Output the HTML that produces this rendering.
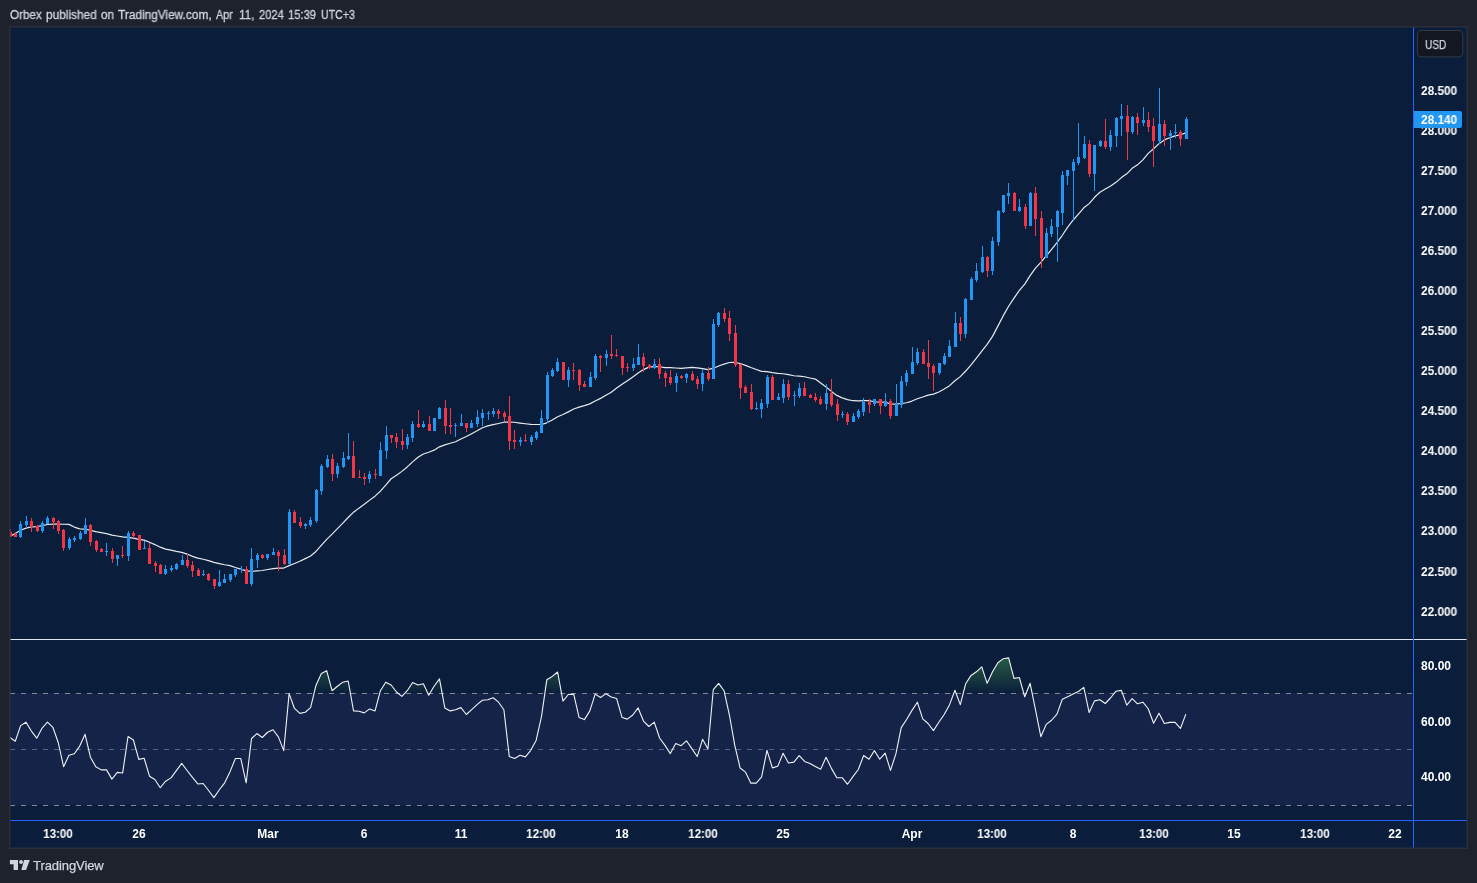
<!DOCTYPE html><html><head><meta charset="utf-8"><title>Chart</title><style>
html,body{margin:0;padding:0}body{width:1477px;height:883px;background:#1e222d;position:relative;overflow:hidden;font-family:"Liberation Sans",sans-serif}
.t{position:absolute;white-space:nowrap;line-height:1;color:#fff;font-weight:bold;font-size:12px;will-change:transform}
.pl{left:1420.5px;transform-origin:0 50%;transform:scaleX(.985)}
.tl{transform:translateX(-50%)}
.hw{top:8.8px;font-weight:normal;color:#d1d4dc;transform-origin:0 50%;-webkit-text-stroke:0.3px #d1d4dc}
</style></head><body>
<svg width="1477" height="883" viewBox="0 0 1477 883" style="position:absolute;left:0;top:0">
<defs><linearGradient id="ob" gradientUnits="userSpaceOnUse" x1="0" y1="610" x2="0" y2="693.6"><stop offset="0" stop-color="#4caf50" stop-opacity="1"/><stop offset="1" stop-color="#4caf50" stop-opacity="0"/></linearGradient>
<clipPath id="pane"><rect x="10" y="27" width="1403" height="793"/></clipPath></defs>
<rect x="9" y="26" width="1459" height="823" fill="#2a2e39"/>
<rect x="10" y="27" width="1457" height="821" fill="#0a1e3b"/>
<rect x="10" y="693" width="1403" height="112" fill="#7e57c2" fill-opacity="0.1"/>
<path d="M9.90 693.50 L9.90 693.50 L15.27 693.50 L20.64 693.50 L26.01 693.50 L31.38 693.50 L36.75 693.50 L42.12 693.50 L47.49 693.50 L52.86 693.50 L58.23 693.50 L63.60 693.50 L68.96 693.50 L74.33 693.50 L79.70 693.50 L85.07 693.50 L90.44 693.50 L95.81 693.50 L101.18 693.50 L106.55 693.50 L111.92 693.50 L117.29 693.50 L122.66 693.50 L128.03 693.50 L133.40 693.50 L138.77 693.50 L144.14 693.50 L149.51 693.50 L154.88 693.50 L160.25 693.50 L165.62 693.50 L170.99 693.50 L176.35 693.50 L181.72 693.50 L187.09 693.50 L192.46 693.50 L197.83 693.50 L203.20 693.50 L208.57 693.50 L213.94 693.50 L219.31 693.50 L224.68 693.50 L230.05 693.50 L235.42 693.50 L240.79 693.50 L246.16 693.50 L251.53 693.50 L256.90 693.50 L262.27 693.50 L267.64 693.50 L273.01 693.50 L278.38 693.50 L283.74 693.50 L289.11 693.50 L294.48 693.50 L299.85 693.50 L305.22 693.50 L310.59 693.50 L315.96 685.45 L321.33 673.46 L326.70 670.67 L332.07 690.71 L337.44 686.27 L342.81 682.17 L348.18 681.02 L353.55 693.50 L358.92 693.50 L364.29 693.50 L369.66 693.50 L375.03 693.50 L380.40 690.71 L385.76 682.17 L391.13 684.96 L396.50 692.02 L401.87 693.50 L407.24 690.71 L412.61 682.50 L417.98 684.96 L423.35 683.81 L428.72 693.50 L434.09 686.27 L439.46 678.88 L444.83 693.50 L450.20 693.50 L455.57 693.50 L460.94 693.50 L466.31 693.50 L471.68 693.50 L477.05 693.50 L482.42 693.50 L487.79 693.50 L493.16 693.50 L498.52 693.50 L503.89 693.50 L509.26 693.50 L514.63 693.50 L520.00 693.50 L525.37 693.50 L530.74 693.50 L536.11 693.50 L541.48 693.50 L546.85 679.70 L552.22 676.42 L557.59 671.99 L562.96 693.50 L568.33 693.50 L573.70 693.50 L579.07 693.50 L584.44 693.50 L589.81 693.50 L595.18 693.50 L600.55 693.50 L605.91 693.50 L611.28 693.50 L616.65 693.50 L622.02 693.50 L627.39 693.50 L632.76 693.50 L638.13 693.50 L643.50 693.50 L648.87 693.50 L654.24 693.50 L659.61 693.50 L664.98 693.50 L670.35 693.50 L675.72 693.50 L681.09 693.50 L686.46 693.50 L691.83 693.50 L697.20 693.50 L702.57 693.50 L707.94 693.50 L713.30 689.56 L718.67 683.32 L724.04 690.71 L729.41 693.50 L734.78 693.50 L740.15 693.50 L745.52 693.50 L750.89 693.50 L756.26 693.50 L761.63 693.50 L767.00 693.50 L772.37 693.50 L777.74 693.50 L783.11 693.50 L788.48 693.50 L793.85 693.50 L799.22 693.50 L804.59 693.50 L809.96 693.50 L815.33 693.50 L820.69 693.50 L826.06 693.50 L831.43 693.50 L836.80 693.50 L842.17 693.50 L847.54 693.50 L852.91 693.50 L858.28 693.50 L863.65 693.50 L869.02 693.50 L874.39 693.50 L879.76 693.50 L885.13 693.50 L890.50 693.50 L895.87 693.50 L901.24 693.50 L906.61 693.50 L911.98 693.50 L917.35 693.50 L922.72 693.50 L928.08 693.50 L933.45 693.50 L938.82 693.50 L944.19 693.50 L949.56 693.50 L954.93 690.20 L960.30 693.50 L965.67 683.80 L971.04 675.42 L976.41 671.81 L981.78 666.88 L987.15 683.30 L992.52 671.81 L997.89 662.78 L1003.26 658.67 L1008.63 657.85 L1014.00 678.38 L1019.37 677.56 L1024.74 693.50 L1030.11 683.30 L1035.47 693.50 L1040.84 693.50 L1046.21 693.50 L1051.58 693.50 L1056.95 693.50 L1062.32 693.50 L1067.69 693.50 L1073.06 693.50 L1078.43 691.51 L1083.80 687.41 L1089.17 693.50 L1094.54 693.50 L1099.91 693.50 L1105.28 693.50 L1110.65 693.50 L1116.02 691.19 L1121.39 690.36 L1126.76 693.50 L1132.13 693.50 L1137.50 693.50 L1142.86 693.50 L1148.23 693.50 L1153.60 693.50 L1158.97 693.50 L1164.34 693.50 L1169.71 693.50 L1175.08 693.50 L1180.45 693.50 L1185.82 693.50 L1185.82 693.50 Z" fill="url(#ob)" clip-path="url(#pane)"/>
<g shape-rendering="crispEdges" fill="none" stroke-width="1" stroke-dasharray="5 6">
<path d="M10 693.5H1413" stroke="#858894"/>
<path d="M10 749.5H1413" stroke="#5a6480"/>
<path d="M10 805.5H1413" stroke="#858894"/>
</g>
<path d="M9.90 536.40 L15.27 533.47 L20.64 530.20 L26.01 528.12 L31.38 526.89 L36.75 526.57 L42.12 525.64 L47.49 524.52 L52.86 524.19 L58.23 524.16 L63.60 524.24 L68.96 524.41 L74.33 527.08 L79.70 528.86 L85.07 529.03 L90.44 530.31 L95.81 531.68 L101.18 532.65 L106.55 533.63 L111.92 535.06 L117.29 535.99 L122.66 536.95 L128.03 537.39 L133.40 538.14 L138.77 539.29 L144.14 540.14 L149.51 542.19 L154.88 544.58 L160.25 547.18 L165.62 549.08 L170.99 550.08 L176.35 551.32 L181.72 552.42 L187.09 554.07 L192.46 556.37 L197.83 558.07 L203.20 559.27 L208.57 560.67 L213.94 562.41 L219.31 563.57 L224.68 564.76 L230.05 565.66 L235.42 567.47 L240.79 569.11 L246.16 570.82 L251.53 571.37 L256.90 570.92 L262.27 570.52 L267.64 569.53 L273.01 568.68 L278.38 568.08 L283.74 568.07 L289.11 565.65 L294.48 563.50 L299.85 561.24 L305.22 558.64 L310.59 555.95 L315.96 551.46 L321.33 545.47 L326.70 539.33 L332.07 534.08 L337.44 528.69 L342.81 523.13 L348.18 517.49 L353.55 512.19 L358.92 508.14 L364.29 504.34 L369.66 500.13 L375.03 496.18 L380.40 491.08 L385.76 485.03 L391.13 478.75 L396.50 475.26 L401.87 471.37 L407.24 466.92 L412.61 461.92 L417.98 457.27 L423.35 453.96 L428.72 452.21 L434.09 450.15 L439.46 446.85 L444.83 444.84 L450.20 443.29 L455.57 441.73 L460.94 438.97 L466.31 436.47 L471.68 433.67 L477.05 430.82 L482.42 427.73 L487.79 425.88 L493.16 424.68 L498.52 423.48 L503.89 422.22 L509.26 422.02 L514.63 422.26 L520.00 423.07 L525.37 423.77 L530.74 424.42 L536.11 424.48 L541.48 424.48 L546.85 422.83 L552.22 420.04 L557.59 416.78 L562.96 414.53 L568.33 411.89 L573.70 409.04 L579.07 407.15 L584.44 405.65 L589.81 403.85 L595.18 401.00 L600.55 398.36 L605.91 395.35 L611.28 392.30 L616.65 388.05 L622.02 384.35 L627.39 380.75 L632.76 376.90 L638.13 372.90 L643.50 369.60 L648.87 367.10 L654.24 366.54 L659.61 366.74 L664.98 367.55 L670.35 367.70 L675.72 368.00 L681.09 368.35 L686.46 367.80 L691.83 367.44 L697.20 367.79 L702.57 368.64 L707.94 369.68 L713.30 368.19 L718.67 366.04 L724.04 364.18 L729.41 362.48 L734.78 362.33 L740.15 363.53 L745.52 365.33 L750.89 367.47 L756.26 369.47 L761.63 371.42 L767.00 371.57 L772.37 372.67 L777.74 373.36 L783.11 373.76 L788.48 374.71 L793.85 375.75 L799.22 376.16 L804.59 376.76 L809.96 378.01 L815.33 379.06 L820.69 383.05 L826.06 387.06 L831.43 391.36 L836.80 395.41 L842.17 397.87 L847.54 399.57 L852.91 400.72 L858.28 400.83 L863.65 400.54 L869.02 400.64 L874.39 401.74 L879.76 402.04 L885.13 402.25 L890.50 403.85 L895.87 404.21 L901.24 403.51 L906.61 402.76 L911.98 401.07 L917.35 398.77 L922.72 396.97 L928.08 395.12 L933.45 394.12 L938.82 392.02 L944.19 389.07 L949.56 385.67 L954.93 380.73 L960.30 376.63 L965.67 371.04 L971.04 364.89 L976.41 358.19 L981.78 351.10 L987.15 344.35 L992.52 336.36 L997.89 326.11 L1003.26 315.66 L1008.63 306.26 L1014.00 298.16 L1019.37 290.41 L1024.74 284.12 L1030.11 275.56 L1035.47 268.17 L1040.84 262.43 L1046.21 255.93 L1051.58 249.43 L1056.95 242.69 L1062.32 235.28 L1067.69 227.08 L1073.06 220.23 L1078.43 214.12 L1083.80 207.77 L1089.17 203.61 L1094.54 197.30 L1099.91 192.30 L1105.28 189.09 L1110.65 186.09 L1116.02 182.34 L1121.39 177.58 L1126.76 173.83 L1132.13 168.37 L1137.50 164.87 L1142.86 159.91 L1148.23 153.35 L1153.60 148.75 L1158.97 143.64 L1164.34 139.89 L1169.71 137.79 L1175.08 135.88 L1180.45 134.73 L1185.82 132.83" fill="none" stroke="#e6e9ee" stroke-width="1.2" stroke-linejoin="round" clip-path="url(#pane)"/>
<g shape-rendering="crispEdges" clip-path="url(#pane)"><path d="M20 521h1v17h-1z M19 524h3v13h-3z M26 516h1v12h-1z M25 521h3v4h-3z M42 521h1v12h-1z M41 523h3v8h-3z M47 516h1v8h-1z M46 518h3v6h-3z M69 537h1v13h-1z M68 539h3v9h-3z M74 536h1v6h-1z M73 538h3v2h-3z M80 531h1v9h-1z M79 533h3v6h-3z M85 518h1v16h-1z M84 525h3v9h-3z M106 543h1v13h-1z M105 551h3v1h-3z M117 555h1v11h-1z M116 555h3v4h-3z M128 531h1v30h-1z M127 533h3v23h-3z M144 541h1v8h-1z M143 548h3v1h-3z M165 565h1v10h-1z M164 569h3v5h-3z M171 565h1v7h-1z M170 568h3v2h-3z M176 563h1v7h-1z M175 564h3v5h-3z M182 555h1v10h-1z M181 560h3v5h-3z M203 570h1v6h-1z M202 574h3v1h-3z M219 570h1v17h-1z M218 582h3v4h-3z M224 574h1v9h-1z M223 579h3v4h-3z M230 574h1v8h-1z M229 574h3v6h-3z M235 569h1v8h-1z M234 569h3v6h-3z M241 566h1v7h-1z M240 569h3v1h-3z M251 548h1v38h-1z M250 559h3v25h-3z M257 553h1v15h-1z M256 555h3v5h-3z M267 554h1v6h-1z M266 554h3v4h-3z M273 548h1v7h-1z M272 552h3v3h-3z M289 509h1v55h-1z M288 512h3v52h-3z M305 523h1v6h-1z M304 524h3v2h-3z M310 517h1v10h-1z M309 520h3v5h-3z M316 489h1v34h-1z M315 490h3v31h-3z M321 464h1v31h-1z M320 466h3v25h-3z M327 455h1v13h-1z M326 459h3v8h-3z M337 463h1v15h-1z M336 466h3v8h-3z M343 452h1v16h-1z M342 458h3v9h-3z M348 433h1v27h-1z M347 456h3v3h-3z M369 471h1v12h-1z M368 474h3v5h-3z M380 442h1v34h-1z M379 450h3v26h-3z M386 426h1v33h-1z M385 435h3v16h-3z M407 434h1v15h-1z M406 437h3v8h-3z M412 421h1v21h-1z M411 424h3v14h-3z M423 421h1v7h-1z M422 424h3v3h-3z M434 418h1v13h-1z M433 418h3v13h-3z M439 407h1v12h-1z M438 408h3v11h-3z M455 423h1v14h-1z M454 425h3v1h-3z M461 414h1v12h-1z M460 423h3v3h-3z M471 420h1v8h-1z M470 423h3v5h-3z M477 410h1v17h-1z M476 417h3v7h-3z M482 409h1v17h-1z M481 413h3v5h-3z M488 411h1v9h-1z M487 413h3v1h-3z M493 408h1v9h-1z M492 411h3v3h-3z M520 437h1v9h-1z M519 440h3v2h-3z M531 435h1v10h-1z M530 437h3v5h-3z M536 431h1v9h-1z M535 432h3v6h-3z M541 410h1v23h-1z M540 418h3v15h-3z M547 372h1v51h-1z M546 375h3v44h-3z M552 368h1v9h-1z M551 370h3v6h-3z M557 358h1v14h-1z M556 362h3v9h-3z M568 367h1v20h-1z M567 370h3v10h-3z M590 372h1v15h-1z M589 377h3v10h-3z M595 354h1v26h-1z M594 356h3v22h-3z M606 350h1v16h-1z M605 354h3v4h-3z M633 358h1v13h-1z M632 364h3v4h-3z M638 344h1v21h-1z M637 357h3v8h-3z M654 359h1v10h-1z M653 364h3v4h-3z M676 373h1v19h-1z M675 376h3v7h-3z M686 373h1v10h-1z M685 374h3v4h-3z M702 369h1v22h-1z M701 373h3v11h-3z M713 319h1v60h-1z M712 324h3v55h-3z M718 312h1v15h-1z M717 313h3v12h-3z M756 402h1v8h-1z M755 408h3v1h-3z M761 399h1v19h-1z M760 403h3v6h-3z M767 375h1v33h-1z M766 377h3v27h-3z M778 393h1v7h-1z M777 397h3v3h-3z M783 379h1v24h-1z M782 384h3v14h-3z M794 391h1v15h-1z M793 395h3v1h-3z M799 383h1v15h-1z M798 388h3v8h-3z M826 384h1v26h-1z M825 393h3v11h-3z M842 411h1v7h-1z M841 414h3v1h-3z M853 413h1v9h-1z M852 416h3v6h-3z M858 409h1v10h-1z M857 411h3v6h-3z M863 398h1v18h-1z M862 402h3v10h-3z M874 399h1v7h-1z M873 399h3v5h-3z M885 393h1v14h-1z M884 401h3v5h-3z M896 384h1v32h-1z M895 404h3v12h-3z M901 376h1v32h-1z M900 381h3v24h-3z M906 370h1v16h-1z M905 373h3v9h-3z M912 347h1v27h-1z M911 362h3v12h-3z M917 348h1v17h-1z M916 352h3v11h-3z M939 363h1v12h-1z M938 363h3v10h-3z M944 353h1v12h-1z M943 356h3v8h-3z M949 340h1v17h-1z M948 346h3v11h-3z M955 312h1v35h-1z M954 323h3v24h-3z M965 298h1v40h-1z M964 299h3v35h-3z M971 277h1v23h-1z M970 279h3v21h-3z M976 263h1v19h-1z M975 271h3v9h-3z M982 246h1v27h-1z M981 257h3v15h-3z M992 237h1v38h-1z M991 241h3v30h-3z M998 210h1v36h-1z M997 211h3v31h-3z M1003 195h1v18h-1z M1002 195h3v17h-3z M1008 183h1v21h-1z M1007 193h3v3h-3z M1019 199h1v13h-1z M1018 207h3v4h-3z M1030 192h1v34h-1z M1029 193h3v33h-3z M1046 228h1v30h-1z M1045 233h3v25h-3z M1051 219h1v18h-1z M1050 226h3v8h-3z M1057 210h1v52h-1z M1056 211h3v16h-3z M1062 171h1v54h-1z M1061 175h3v38h-3z M1067 170h1v15h-1z M1066 170h3v6h-3z M1073 159h1v62h-1z M1072 162h3v9h-3z M1078 123h1v42h-1z M1077 157h3v6h-3z M1084 136h1v23h-1z M1083 144h3v14h-3z M1094 145h1v46h-1z M1093 145h3v29h-3z M1100 140h1v7h-1z M1099 141h3v5h-3z M1110 130h1v21h-1z M1109 135h3v12h-3z M1116 117h1v30h-1z M1115 118h3v18h-3z M1121 104h1v32h-1z M1120 116h3v3h-3z M1132 116h1v18h-1z M1131 117h3v15h-3z M1143 107h1v19h-1z M1142 120h3v3h-3z M1159 88h1v56h-1z M1158 124h3v17h-3z M1170 130h1v20h-1z M1169 133h3v3h-3z M1175 124h1v14h-1z M1174 132h3v1h-3z M1186 117h1v22h-1z M1185 119h3v20h-3z" fill="#2196f3"/><path d="M10 529h1v8h-1z M9 532h3v4h-3z M15 532h1v5h-1z M14 534h3v3h-3z M31 518h1v14h-1z M30 521h3v6h-3z M37 525h1v7h-1z M36 526h3v5h-3z M53 517h1v12h-1z M52 518h3v4h-3z M58 520h1v14h-1z M57 521h3v10h-3z M63 529h1v22h-1z M62 530h3v18h-3z M90 524h1v22h-1z M89 525h3v17h-3z M96 540h1v12h-1z M95 541h3v9h-3z M101 548h1v4h-1z M100 549h3v3h-3z M112 548h1v15h-1z M111 551h3v8h-3z M122 546h1v12h-1z M121 555h3v1h-3z M133 531h1v7h-1z M132 533h3v3h-3z M139 535h1v15h-1z M138 535h3v15h-3z M149 543h1v21h-1z M148 548h3v16h-3z M155 561h1v11h-1z M154 563h3v3h-3z M160 564h1v10h-1z M159 565h3v9h-3z M187 554h1v14h-1z M186 560h3v6h-3z M192 561h1v16h-1z M191 565h3v6h-3z M198 568h1v8h-1z M197 570h3v6h-3z M208 573h1v8h-1z M207 574h3v6h-3z M214 579h1v10h-1z M213 579h3v7h-3z M246 566h1v18h-1z M245 569h3v15h-3z M262 554h1v5h-1z M261 555h3v3h-3z M278 550h1v21h-1z M277 552h3v4h-3z M284 549h1v16h-1z M283 555h3v9h-3z M294 510h1v13h-1z M293 512h3v11h-3z M300 517h1v11h-1z M299 522h3v4h-3z M332 454h1v27h-1z M331 459h3v15h-3z M353 441h1v37h-1z M352 456h3v22h-3z M359 470h1v8h-1z M358 477h3v1h-3z M364 473h1v12h-1z M363 477h3v2h-3z M375 469h1v10h-1z M374 474h3v1h-3z M391 435h1v8h-1z M390 435h3v3h-3z M396 433h1v15h-1z M395 437h3v5h-3z M402 429h1v21h-1z M401 441h3v4h-3z M418 410h1v18h-1z M417 424h3v3h-3z M429 416h1v15h-1z M428 424h3v7h-3z M445 400h1v34h-1z M444 408h3v18h-3z M450 408h1v26h-1z M449 425h3v2h-3z M466 423h1v9h-1z M465 423h3v5h-3z M498 409h1v10h-1z M497 411h3v3h-3z M504 411h1v10h-1z M503 413h3v4h-3z M509 396h1v54h-1z M508 416h3v25h-3z M514 430h1v19h-1z M513 440h3v2h-3z M525 434h1v8h-1z M524 440h3v1h-3z M563 362h1v18h-1z M562 362h3v18h-3z M573 363h1v17h-1z M572 370h3v1h-3z M579 369h1v22h-1z M578 370h3v15h-3z M584 381h1v6h-1z M583 384h3v3h-3z M600 355h1v17h-1z M599 356h3v2h-3z M611 335h1v24h-1z M610 354h3v2h-3z M616 349h1v8h-1z M615 355h3v1h-3z M622 356h1v19h-1z M621 356h3v12h-3z M627 363h1v9h-1z M626 367h3v1h-3z M643 353h1v19h-1z M642 357h3v9h-3z M649 364h1v5h-1z M648 365h3v3h-3z M659 358h1v21h-1z M658 364h3v10h-3z M665 371h1v16h-1z M664 373h3v5h-3z M670 370h1v15h-1z M669 377h3v6h-3z M681 375h1v4h-1z M680 376h3v2h-3z M692 371h1v10h-1z M691 374h3v6h-3z M697 376h1v13h-1z M696 379h3v5h-3z M708 367h1v14h-1z M707 373h3v6h-3z M724 308h1v14h-1z M723 313h3v6h-3z M729 311h1v30h-1z M728 318h3v16h-3z M735 325h1v42h-1z M734 333h3v32h-3z M740 364h1v35h-1z M739 364h3v24h-3z M745 385h1v8h-1z M744 387h3v6h-3z M751 384h1v26h-1z M750 392h3v17h-3z M772 375h1v25h-1z M771 377h3v23h-3z M788 380h1v20h-1z M787 384h3v13h-3z M804 382h1v14h-1z M803 388h3v8h-3z M810 394h1v4h-1z M809 395h3v3h-3z M815 393h1v9h-1z M814 397h3v3h-3z M820 396h1v9h-1z M819 399h3v5h-3z M831 379h1v28h-1z M830 393h3v12h-3z M837 399h1v22h-1z M836 404h3v11h-3z M847 412h1v13h-1z M846 414h3v8h-3z M869 399h1v14h-1z M868 402h3v3h-3z M880 399h1v15h-1z M879 399h3v7h-3z M890 399h1v20h-1z M889 401h3v15h-3z M923 349h1v15h-1z M922 352h3v12h-3z M928 340h1v39h-1z M927 363h3v4h-3z M933 364h1v27h-1z M932 366h3v7h-3z M960 317h1v24h-1z M959 323h3v11h-3z M987 256h1v21h-1z M986 257h3v14h-3z M1014 192h1v19h-1z M1013 193h3v18h-3z M1025 204h1v25h-1z M1024 207h3v19h-3z M1035 187h1v49h-1z M1034 193h3v26h-3z M1041 211h1v57h-1z M1040 218h3v40h-3z M1089 140h1v37h-1z M1088 144h3v30h-3z M1105 119h1v30h-1z M1104 141h3v6h-3z M1127 105h1v55h-1z M1126 116h3v16h-3z M1137 113h1v22h-1z M1136 117h3v6h-3z M1148 112h1v20h-1z M1147 120h3v7h-3z M1153 118h1v49h-1z M1152 126h3v15h-3z M1164 120h1v26h-1z M1163 124h3v12h-3z M1180 130h1v16h-1z M1179 132h3v7h-3z" fill="#f23645"/></g>
<path d="M9.90 737.39 L15.27 741.20 L20.64 725.65 L26.01 722.17 L31.38 731.09 L36.75 738.15 L42.12 728.04 L47.49 722.17 L52.86 727.28 L58.23 742.50 L63.60 766.74 L68.96 755.22 L74.33 753.70 L79.70 746.09 L85.07 734.35 L90.44 757.17 L95.81 766.74 L101.18 769.89 L106.55 769.89 L111.92 779.13 L117.29 772.39 L122.66 772.93 L128.03 736.52 L133.40 740.00 L138.77 759.35 L144.14 758.26 L149.51 776.20 L154.88 779.54 L160.25 787.75 L165.62 781.18 L170.99 777.90 L176.35 770.67 L181.72 763.45 L187.09 770.51 L192.46 777.41 L197.83 783.97 L203.20 783.48 L208.57 790.54 L213.94 797.60 L219.31 789.72 L224.68 782.82 L230.05 771.66 L235.42 758.52 L240.79 758.52 L246.16 782.82 L251.53 738.49 L256.90 733.56 L262.27 737.50 L267.64 732.25 L273.01 729.79 L278.38 736.85 L283.74 750.64 L289.11 693.66 L294.48 708.44 L299.85 713.37 L305.22 712.22 L310.59 707.62 L315.96 685.45 L321.33 673.46 L326.70 670.67 L332.07 690.71 L337.44 686.27 L342.81 682.17 L348.18 681.02 L353.55 710.90 L358.92 711.23 L364.29 712.87 L369.66 708.93 L375.03 710.90 L380.40 690.71 L385.76 682.17 L391.13 684.96 L396.50 692.02 L401.87 696.45 L407.24 690.71 L412.61 682.50 L417.98 684.96 L423.35 683.81 L428.72 695.30 L434.09 686.27 L439.46 678.88 L444.83 707.95 L450.20 710.90 L455.57 709.75 L460.94 707.62 L466.31 714.52 L471.68 709.59 L477.05 704.66 L482.42 700.23 L487.79 699.74 L493.16 697.77 L498.52 702.20 L503.89 709.75 L509.26 756.39 L514.63 758.52 L520.00 755.24 L525.37 756.88 L530.74 750.31 L536.11 740.46 L541.48 716.65 L546.85 679.70 L552.22 676.42 L557.59 671.99 L562.96 701.05 L568.33 694.48 L573.70 694.15 L579.07 717.47 L584.44 719.61 L589.81 710.90 L595.18 694.15 L600.55 697.44 L605.91 693.66 L611.28 696.95 L616.65 698.59 L622.02 717.47 L627.39 719.11 L632.76 715.01 L638.13 707.95 L643.50 721.08 L648.87 726.50 L654.24 722.07 L659.61 738.00 L664.98 745.39 L670.35 753.60 L675.72 743.58 L681.09 745.71 L686.46 740.79 L691.83 748.67 L697.20 756.55 L702.57 739.31 L707.94 749.00 L713.30 689.56 L718.67 683.32 L724.04 690.71 L729.41 715.01 L734.78 745.39 L740.15 768.05 L745.52 772.15 L750.89 783.15 L756.26 783.15 L761.63 776.91 L767.00 750.31 L772.37 767.88 L777.74 766.24 L783.11 753.27 L788.48 762.96 L793.85 762.13 L799.22 755.57 L804.59 761.48 L809.96 763.45 L815.33 766.40 L820.69 769.20 L826.06 757.21 L831.43 768.37 L836.80 777.72 L842.17 777.72 L847.54 784.29 L852.91 776.57 L858.28 769.51 L863.65 755.55 L869.02 759.17 L874.39 750.63 L879.76 759.17 L885.13 753.09 L890.50 770.33 L895.87 753.91 L901.24 727.64 L906.61 719.43 L911.98 710.40 L917.35 702.19 L922.72 718.94 L928.08 723.53 L933.45 730.59 L938.82 722.22 L944.19 714.50 L949.56 704.65 L954.93 690.20 L960.30 704.65 L965.67 683.80 L971.04 675.42 L976.41 671.81 L981.78 666.88 L987.15 683.30 L992.52 671.81 L997.89 662.78 L1003.26 658.67 L1008.63 657.85 L1014.00 678.38 L1019.37 677.56 L1024.74 696.77 L1030.11 683.30 L1035.47 709.58 L1040.84 736.67 L1046.21 724.35 L1051.58 720.25 L1056.95 714.17 L1062.32 699.23 L1067.69 696.77 L1073.06 693.98 L1078.43 691.51 L1083.80 687.41 L1089.17 712.53 L1094.54 700.87 L1099.91 699.72 L1105.28 703.50 L1110.65 697.75 L1116.02 691.19 L1121.39 690.36 L1126.76 705.14 L1132.13 698.57 L1137.50 703.83 L1142.86 702.19 L1148.23 708.76 L1153.60 723.21 L1158.97 713.35 L1164.34 723.53 L1169.71 722.38 L1175.08 722.38 L1180.45 728.46 L1185.82 714.17" fill="none" stroke="#f0f2f6" stroke-width="1.1" stroke-linejoin="round" clip-path="url(#pane)"/>
<g shape-rendering="crispEdges">
<rect x="10" y="639" width="1457" height="1" fill="#e0e3eb"/>
<rect x="10" y="820" width="1457" height="1" fill="#2962ff"/>
<rect x="1413" y="27" width="1" height="821" fill="#2962ff"/>
<rect x="10" y="27" width="1" height="821" fill="#2a2e39" fill-opacity="0.5"/>
<rect x="11" y="27" width="1456" height="1" fill="#2a2e39" fill-opacity="0.5"/>
<rect x="1466" y="28" width="1" height="820" fill="#2a2e39" fill-opacity="0.5"/>
<rect x="11" y="847" width="1455" height="1" fill="#2a2e39" fill-opacity="0.5"/>
</g>
<rect x="1417.4" y="30.5" width="45.4" height="26.4" rx="4" fill="#131722" stroke="#363a45"/>
<g fill="#d1d4dc"><path d="M9.9 860.1H18V869.9H13.6V864.2H9.9z"/><circle cx="21.05" cy="862" r="1.95"/><path d="M24.1 860.1H29.8L26.1 869.9H21.3z"/></g>
</svg>
<div id="hdr">
<span class="t hw" style="left:10.0px;transform:scaleX(0.972)">Orbex</span> 
<span class="t hw" style="left:45.7px;transform:scaleX(0.988)">published</span> 
<span class="t hw" style="left:101.0px;transform:scaleX(0.970)">on</span> 
<span class="t hw" style="left:117.8px;transform:scaleX(0.988)">TradingView.com,</span> 
<span class="t hw" style="left:216.0px;transform:scaleX(0.898)">Apr</span> 
<span class="t hw" style="left:238.6px;transform:scaleX(0.975)">11,</span> 
<span class="t hw" style="left:258.8px;transform:scaleX(0.929)">2024</span> 
<span class="t hw" style="left:288.1px;transform:scaleX(0.934)">15:39</span> 
<span class="t hw" style="left:320.9px;transform:scaleX(0.883)">UTC+3</span> 
</div>
<div class="t" id="usd" style="left:1425.4px;top:39px;font-weight:normal;color:#d1d4dc;font-size:12px;transform-origin:0 50%;transform:scaleX(.84);-webkit-text-stroke:0.25px #d1d4dc">USD</div>
<div class="t pl" style="top:84.5px">28.500</div>
<div class="t pl" style="top:124.5px">28.000</div>
<div class="t pl" style="top:164.5px">27.500</div>
<div class="t pl" style="top:204.5px">27.000</div>
<div class="t pl" style="top:244.5px">26.500</div>
<div class="t pl" style="top:284.5px">26.000</div>
<div class="t pl" style="top:324.5px">25.500</div>
<div class="t pl" style="top:364.5px">25.000</div>
<div class="t pl" style="top:404.5px">24.500</div>
<div class="t pl" style="top:444.5px">24.000</div>
<div class="t pl" style="top:485.0px">23.500</div>
<div class="t pl" style="top:525.0px">23.000</div>
<div class="t pl" style="top:565.5px">22.500</div>
<div class="t pl" style="top:605.5px">22.000</div>
<div style="position:absolute;left:1414px;top:111px;width:48px;height:17px;background:#2196f3;border-radius:0 2px 2px 0"></div>
<div class="t pl" style="top:113.6px">28.140</div>
<div class="t pl" style="top:659.5px">80.00</div>
<div class="t pl" style="top:715.6px">60.00</div>
<div class="t pl" style="top:770.8px">40.00</div>
<div class="t tl" style="left:58.1px;top:828px;transform:translateX(-50%) scaleX(.965)">13:00</div>
<div class="t tl" style="left:138.7px;top:828px;transform:translateX(-50%)">26</div>
<div class="t tl" style="left:267.5px;top:828px;transform:translateX(-50%)">Mar</div>
<div class="t tl" style="left:364.2px;top:828px;transform:translateX(-50%)">6</div>
<div class="t tl" style="left:460.8px;top:828px;transform:translateX(-50%)">11</div>
<div class="t tl" style="left:541.4px;top:828px;transform:translateX(-50%) scaleX(.965)">12:00</div>
<div class="t tl" style="left:621.9px;top:828px;transform:translateX(-50%)">18</div>
<div class="t tl" style="left:702.5px;top:828px;transform:translateX(-50%) scaleX(.965)">12:00</div>
<div class="t tl" style="left:783.0px;top:828px;transform:translateX(-50%)">25</div>
<div class="t tl" style="left:911.9px;top:828px;transform:translateX(-50%)">Apr</div>
<div class="t tl" style="left:992.4px;top:828px;transform:translateX(-50%) scaleX(.965)">13:00</div>
<div class="t tl" style="left:1073.0px;top:828px;transform:translateX(-50%)">8</div>
<div class="t tl" style="left:1153.5px;top:828px;transform:translateX(-50%) scaleX(.965)">13:00</div>
<div class="t tl" style="left:1234.0px;top:828px;transform:translateX(-50%)">15</div>
<div class="t tl" style="left:1314.6px;top:828px;transform:translateX(-50%) scaleX(.965)">13:00</div>
<div class="t tl" style="left:1395.1px;top:828px;transform:translateX(-50%)">22</div>
<div class="t" id="tv" style="left:32.8px;top:858.8px;font-weight:normal;color:#d1d4dc;font-size:13px;letter-spacing:-0.08px;-webkit-text-stroke:0.25px #d1d4dc">TradingView</div>
</body></html>
